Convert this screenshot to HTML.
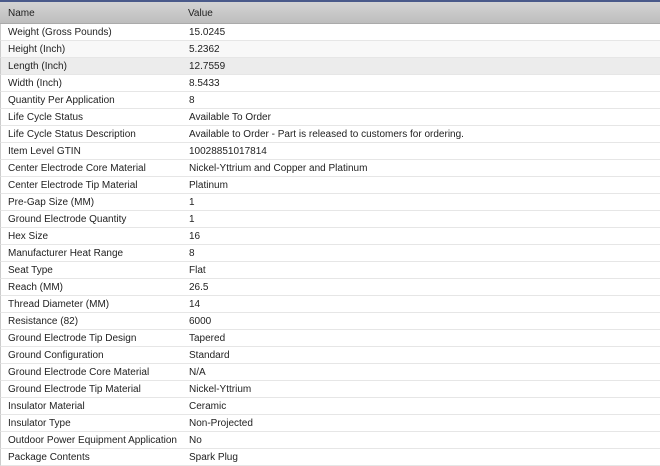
<!DOCTYPE html>
<html><head><style>
body{margin:0;width:660px;height:461px;overflow:hidden;background:#fff;font-family:"Liberation Sans",sans-serif;font-size:10px;color:#222}
.top{height:2px;background:#4a5a8a}
.hdr{height:21px;background:linear-gradient(#d4d4d4,#bdbdbd);border-bottom:1px solid #aaa;position:relative}
.hdr span{position:absolute;top:6px}
.row{height:16px;border-bottom:1px solid #e6e6e6;position:relative;border-left:1px solid #ccc}
.row span{position:absolute;top:3px;white-space:nowrap}
.a{left:7px}.b{left:188px}
.hdr .a{left:8px}
.hl{background:#ececec}.lt{background:#f8f8f8}
</style></head><body>
<div class="top"></div>
<div class="hdr"><span class="a">Name</span><span class="b">Value</span></div>
<div class="row"><span class="a">Weight (Gross Pounds)</span><span class="b">15.0245</span></div>
<div class="row lt"><span class="a">Height (Inch)</span><span class="b">5.2362</span></div>
<div class="row hl"><span class="a">Length (Inch)</span><span class="b">12.7559</span></div>
<div class="row"><span class="a">Width (Inch)</span><span class="b">8.5433</span></div>
<div class="row"><span class="a">Quantity Per Application</span><span class="b">8</span></div>
<div class="row"><span class="a">Life Cycle Status</span><span class="b">Available To Order</span></div>
<div class="row"><span class="a">Life Cycle Status Description</span><span class="b">Available to Order - Part is released to customers for ordering.</span></div>
<div class="row"><span class="a">Item Level GTIN</span><span class="b">10028851017814</span></div>
<div class="row"><span class="a">Center Electrode Core Material</span><span class="b">Nickel-Yttrium and Copper and Platinum</span></div>
<div class="row"><span class="a">Center Electrode Tip Material</span><span class="b">Platinum</span></div>
<div class="row"><span class="a">Pre-Gap Size (MM)</span><span class="b">1</span></div>
<div class="row"><span class="a">Ground Electrode Quantity</span><span class="b">1</span></div>
<div class="row"><span class="a">Hex Size</span><span class="b">16</span></div>
<div class="row"><span class="a">Manufacturer Heat Range</span><span class="b">8</span></div>
<div class="row"><span class="a">Seat Type</span><span class="b">Flat</span></div>
<div class="row"><span class="a">Reach (MM)</span><span class="b">26.5</span></div>
<div class="row"><span class="a">Thread Diameter (MM)</span><span class="b">14</span></div>
<div class="row"><span class="a">Resistance (82)</span><span class="b">6000</span></div>
<div class="row"><span class="a">Ground Electrode Tip Design</span><span class="b">Tapered</span></div>
<div class="row"><span class="a">Ground Configuration</span><span class="b">Standard</span></div>
<div class="row"><span class="a">Ground Electrode Core Material</span><span class="b">N/A</span></div>
<div class="row"><span class="a">Ground Electrode Tip Material</span><span class="b">Nickel-Yttrium</span></div>
<div class="row"><span class="a">Insulator Material</span><span class="b">Ceramic</span></div>
<div class="row"><span class="a">Insulator Type</span><span class="b">Non-Projected</span></div>
<div class="row"><span class="a">Outdoor Power Equipment Application</span><span class="b">No</span></div>
<div class="row"><span class="a">Package Contents</span><span class="b">Spark Plug</span></div>
</body></html>
